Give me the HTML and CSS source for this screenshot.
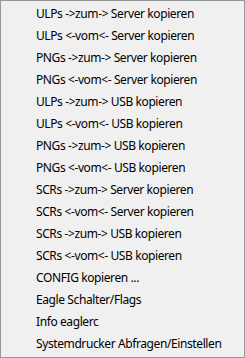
FILE: index.html
```html
<!DOCTYPE html>
<html>
<head>
<meta charset="utf-8">
<link rel="stylesheet" href="styles.css">
</head>
<body>
<ul class="menu">
  <li class="item">ULPs -&gt;zum-&gt; Server kopieren</li>
  <li class="item">ULPs &lt;-vom&lt;- Server kopieren</li>
  <li class="item">PNGs -&gt;zum-&gt; Server kopieren</li>
  <li class="item">PNGs &lt;-vom&lt;- Server kopieren</li>
  <li class="item">ULPs -&gt;zum-&gt; USB kopieren</li>
  <li class="item">ULPs &lt;-vom&lt;- USB kopieren</li>
  <li class="item">PNGs -&gt;zum-&gt; USB kopieren</li>
  <li class="item">PNGs &lt;-vom&lt;- USB kopieren</li>
  <li class="item">SCRs -&gt;zum-&gt; Server kopieren</li>
  <li class="item">SCRs &lt;-vom&lt;- Server kopieren</li>
  <li class="item">SCRs -&gt;zum-&gt; USB kopieren</li>
  <li class="item">SCRs &lt;-vom&lt;- USB kopieren</li>
  <li class="item">CONFIG kopieren ...</li>
  <li class="item">Eagle Schalter/Flags</li>
  <li class="item">Info eaglerc</li>
  <li class="item">Systemdrucker Abfragen/Einstellen</li>
</ul>
</body>
</html>
```

FILE: styles.css
```css
html, body {
  margin: 0;
  padding: 0;
  background: #f0f0f0;
}
.menu {
  list-style: none;
  margin: 0;
  padding: 2px;
  width: 245px;
  height: 358px;
  box-sizing: border-box;
  border: 1px solid #979797;
  background: #f0f0f0;
  font-family: "Noto Sans", "Open Sans", sans-serif;
  font-size: 12px;
  letter-spacing: -0.4px;
  color: #000;
}
.item {
  height: 22px;
  line-height: 22px;
  padding-left: 33px;
  white-space: nowrap;
}
```
